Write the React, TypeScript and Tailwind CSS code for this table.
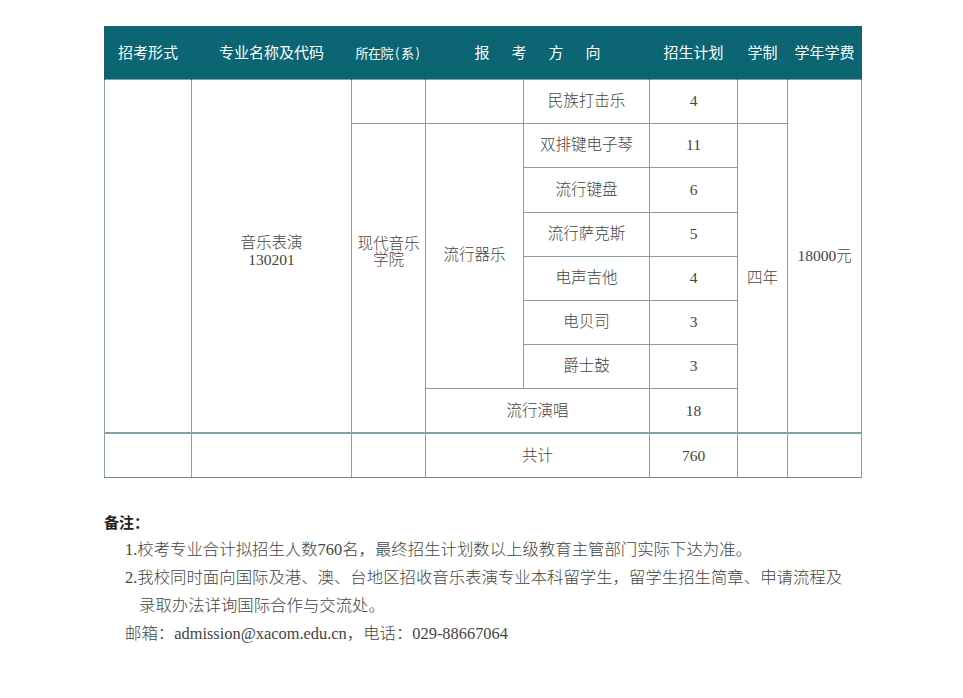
const serif = "font-['Liberation_Serif','Noto_Sans_CJK_SC',serif]";

// 报考方向 rows under 流行器乐
const instruments: [string, string][] = [
  ["双排键电子琴", "11"],
  ["流行键盘", "6"],
  ["流行萨克斯", "5"],
  ["电声吉他", "4"],
  ["电贝司", "3"],
  ["爵士鼓", "3"],
];

const td = "border border-[#86a0a8] text-center align-middle p-0";

function Header() {
  const th = "border-x border-[#1f5a65] text-white font-normal p-0 whitespace-nowrap";
  return (
    <thead>
      <tr className="h-[53px] bg-[#0b6572] text-[15px] font-['Noto_Sans_CJK_SC',sans-serif]">
        <th className={th}>招考形式</th>
        <th className={th}>专业名称及代码</th>
        <th className={`${th} text-[13px] tracking-[-0.5px]`}>
          所在院<span className="px-[2px]">(</span>系<span className="px-[2px]">)</span>
        </th>
        <th className={`${th} tracking-[22px] pl-[22px]`} colSpan={2}>
          报考方向
        </th>
        <th className={th}>招生计划</th>
        <th className={th}>学制</th>
        <th className={th}>学年学费</th>
      </tr>
    </thead>
  );
}

export default function App() {
  return (
    <div className={`min-h-[698px] bg-white pt-[26px] pl-[104px] text-[#444] ${serif}`}>
      <table className="border-collapse table-fixed w-[757px] text-[15.5px] font-light">
        <colgroup>
          <col className="w-[87px]" />
          <col className="w-[160px]" />
          <col className="w-[74px]" />
          <col className="w-[98px]" />
          <col className="w-[126px]" />
          <col className="w-[88px]" />
          <col className="w-[50px]" />
          <col className="w-[74px]" />
        </colgroup>
        <Header />
        <tbody>
          <tr className="h-[44px]">
            <td className={td} rowSpan={8} />
            <td className={`${td} leading-[17px] pb-[10px]`} rowSpan={8}>
              音乐表演
              <br />
              130201
            </td>
            <td className={td} />
            <td className={td} />
            <td className={td}>民族打击乐</td>
            <td className={td}>4</td>
            <td className={td} />
            <td className={td} rowSpan={8}>
              18000元
            </td>
          </tr>
          {instruments.map(([name, plan], i) => (
            <tr key={name} className={i === 1 ? "h-[45px]" : "h-[44px]"}>
              {i === 0 && (
                <>
                  <td className={`${td} leading-[16px] whitespace-nowrap pb-[52px]`} rowSpan={7}>
                    现代音乐
                    <br />
                    学院
                  </td>
                  <td className={`${td} pb-[2px]`} rowSpan={6}>
                    流行器乐
                  </td>
                </>
              )}
              <td className={td}>{name}</td>
              <td className={td}>{plan}</td>
              {i === 0 && (
                <td className={td} rowSpan={7}>
                  四年
                </td>
              )}
            </tr>
          ))}
          <tr className="h-[45px]">
            <td className={td} colSpan={2}>
              流行演唱
            </td>
            <td className={td}>18</td>
          </tr>
          <tr className="h-[44px] border-t-2 border-[#86a0a8]">
            <td className={`${td} border-b-[#6f8d96]`} />
            <td className={`${td} border-b-[#6f8d96]`} />
            <td className={`${td} border-b-[#6f8d96]`} />
            <td className={`${td} border-b-[#6f8d96]`} colSpan={2}>
              共计
            </td>
            <td className={`${td} border-b-[#6f8d96]`}>760</td>
            <td className={`${td} border-b-[#6f8d96]`} />
            <td className={`${td} border-b-[#6f8d96]`} />
          </tr>
        </tbody>
      </table>

      <div className="mt-[30px] text-[16.4px] leading-[28px] font-light">
        <div className="font-bold text-[15px] text-[#222] font-['Noto_Sans_CJK_SC',sans-serif]">备注：</div>
        <div className="pl-[21px]">
          1.校考专业合计拟招生人数760名，最终招生计划数以上级教育主管部门实际下达为准。
        </div>
        <div className="pl-[21px] whitespace-nowrap">
          2.我校同时面向国际及港、澳、台地区招收音乐表演专业本科留学生，留学生招生简章、申请流程及
        </div>
        <div className="pl-[35px]">录取办法详询国际合作与交流处。</div>
        <div className="pl-[21px]">邮箱：admission@xacom.edu.cn，电话：029-88667064</div>
      </div>
    </div>
  );
}
